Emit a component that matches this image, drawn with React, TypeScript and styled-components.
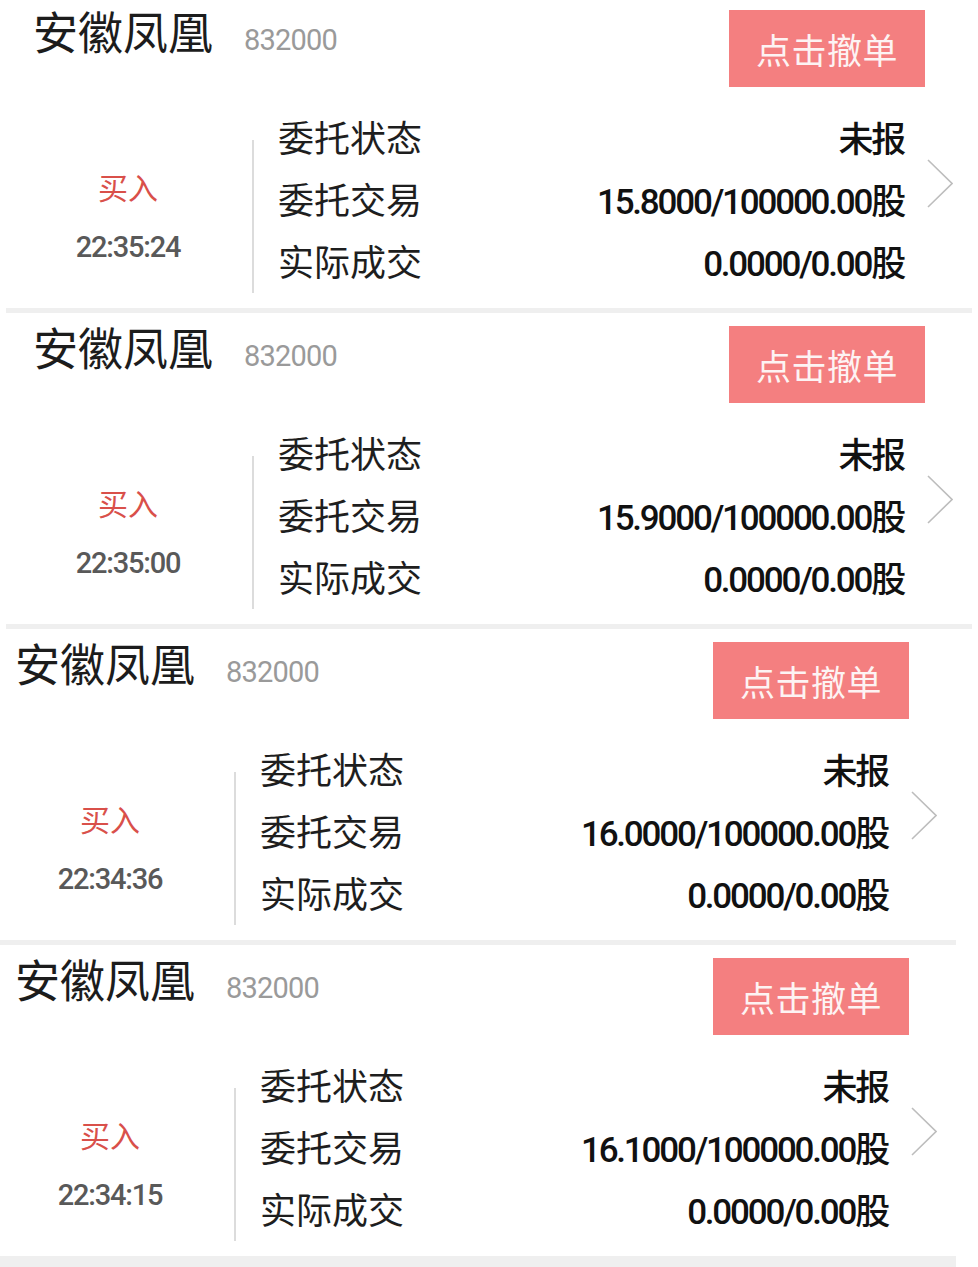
import styled, { createGlobalStyle } from "styled-components";

interface Order {
  name: string;
  code: string;
  side: string;
  time: string;
  status: string;
  price: string;
  amount: string;
  filled: string;
  shifted: boolean;
}

const orders: Array<Order> = [
  { name: "安徽凤凰", code: "832000", side: "买入", time: "22:35:24", status: "未报", price: "15.8000", amount: "100000.00", filled: "0.0000/0.00", shifted: true },
  { name: "安徽凤凰", code: "832000", side: "买入", time: "22:35:00", status: "未报", price: "15.9000", amount: "100000.00", filled: "0.0000/0.00", shifted: true },
  { name: "安徽凤凰", code: "832000", side: "买入", time: "22:34:36", status: "未报", price: "16.0000", amount: "100000.00", filled: "0.0000/0.00", shifted: false },
  { name: "安徽凤凰", code: "832000", side: "买入", time: "22:34:15", status: "未报", price: "16.1000", amount: "100000.00", filled: "0.0000/0.00", shifted: false },
];

const GlobalStyle = createGlobalStyle`
  html, body {
    margin: 0;
    padding: 0;
    background: #fff;
    font-family: Roboto, "Noto Sans CJK SC", sans-serif;
  }
`;

const Page = styled.div`
  margin-top: -3px;
  overflow: hidden;
`;

const Card = styled.div<{ $shifted: boolean; $last: boolean }>`
  box-sizing: border-box;
  margin-left: ${(p) => (p.$shifted ? 6 : 0)}px;
  width: ${(p) => (p.$shifted ? 966 : 956)}px;
  padding-left: ${(p) => (p.$shifted ? 27 : 15)}px;
  border-bottom: ${(p) => (p.$last ? 20 : 5)}px solid #efefef;
  height: ${(p) => (p.$last ? 331 : 316)}px;
`;

const Header = styled.div`
  display: flex;
  justify-content: space-between;
  align-items: flex-start;
  padding-top: 13px;
  padding-right: 47px;
  height: 90px;
  box-sizing: border-box;
`;

const TitleGroup = styled.div`
  display: flex;
  align-items: baseline;
  gap: 31px;
`;

const Title = styled.span`
  font-family: "Noto Sans CJK SC", sans-serif;
  font-size: 45px;
  line-height: 42px;
  color: #1c1c1c;
`;

const Code = styled.span`
  font-family: Roboto, sans-serif;
  font-size: 29px;
  letter-spacing: -0.8px;
  color: #9a9a9a;
`;

const CancelButton = styled.button`
  width: 196px;
  height: 77px;
  border: none;
  padding: 0;
  background: #f47f80;
  color: #fdf3f3;
  font-family: "Noto Sans CJK SC", sans-serif;
  font-size: 35px;
  letter-spacing: 0.5px;
  cursor: pointer;
`;

const Body = styled.div`
  display: flex;
  align-items: flex-start;
  margin-top: 18px;
  padding-right: 19px;
`;

const SideCol = styled.div`
  width: 190px;
  height: 153px;
  margin-top: 35px;
  display: flex;
  flex-direction: column;
  align-items: center;
  justify-content: center;
  gap: 21px;
`;

const Side = styled.span`
  font-family: "Noto Sans CJK SC", sans-serif;
  font-size: 30px;
  line-height: 40px;
  color: #d9504a;
`;

const Time = styled.span`
  font-family: Roboto, sans-serif;
  font-size: 29px;
  font-weight: 500;
  line-height: 40px;
  letter-spacing: -1.2px;
  color: #595959;
`;

const Divider = styled.div`
  width: 2px;
  height: 153px;
  margin: 35px 0 0 29px;
  background: #dcdcdc;
`;

const Rows = styled.div`
  flex: 1;
  margin-left: 24px;
  display: flex;
  flex-direction: column;
`;

const Row = styled.div`
  display: flex;
  justify-content: space-between;
  align-items: center;
  height: 62px;
`;

const Label = styled.span`
  font-family: "Noto Sans CJK SC", sans-serif;
  font-size: 36px;
  color: #1e1e1e;
`;

const Value = styled.span`
  font-family: Roboto, "Noto Sans CJK SC", sans-serif;
  font-size: 35px;
  font-weight: 500;
  letter-spacing: -2.2px;
  color: #111;
`;

const Chevron = styled.svg`
  width: 26px;
  height: 49px;
  margin: 54px 0 0 23px;
  flex-shrink: 0;
`;

export default function App() {
  return (
    <>
      <GlobalStyle />
      <Page>
        {orders.map((o, i) => (
          <Card key={o.time} $shifted={o.shifted} $last={i === orders.length - 1}>
            <Header>
              <TitleGroup>
                <Title>{o.name}</Title>
                <Code>{o.code}</Code>
              </TitleGroup>
              <CancelButton type="button">点击撤单</CancelButton>
            </Header>
            <Body>
              <SideCol>
                <Side>{o.side}</Side>
                <Time>{o.time}</Time>
              </SideCol>
              <Divider />
              <Rows>
                <Row>
                  <Label>委托状态</Label>
                  <Value>{o.status}</Value>
                </Row>
                <Row>
                  <Label>委托交易</Label>
                  <Value>
                    {o.price}/{o.amount}股
                  </Value>
                </Row>
                <Row>
                  <Label>实际成交</Label>
                  <Value>{o.filled}股</Value>
                </Row>
              </Rows>
              <Chevron viewBox="0 0 26 49">
                <polyline points="1,1 25,24.5 1,48" fill="none" stroke="#bdbdbd" strokeWidth="1.6" />
              </Chevron>
            </Body>
          </Card>
        ))}
      </Page>
    </>
  );
}
